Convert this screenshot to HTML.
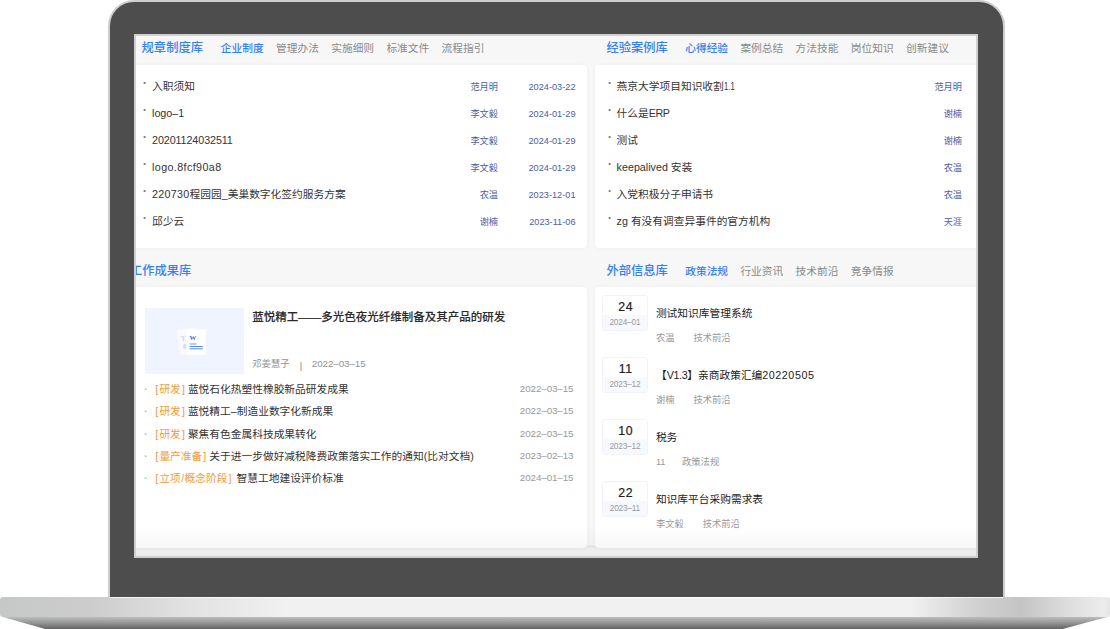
<!DOCTYPE html>
<html lang="zh-CN">
<head>
<meta charset="utf-8">
<title>知识库</title>
<style>
html,body{margin:0;padding:0;}
body{width:1110px;height:629px;overflow:hidden;background:#fff;position:relative;
  font-family:"Liberation Sans","Noto Sans CJK SC",sans-serif;color:#333;}
*{box-sizing:border-box;}
.lid{position:absolute;left:108px;top:0;width:897px;height:600px;border:2px solid #cdcdcd;border-bottom:0;
  border-radius:26px 26px 0 0;background:#4d4d4d;}
.base{position:absolute;left:0;top:597px;width:1110px;height:20px;border-radius:3px;
  background:linear-gradient(to right,#c6c8c8 0,#cccccc 8%,#e2e2e2 17%,#f1f1f1 26%,#f1f1f1 82%,#d0d0d0 88%,#c4c4c4 92%,#dcdcdc 96%,#ececec 99.5%,#e4e4e4 100%);}
.hl{position:absolute;left:110px;top:597px;width:893px;height:1px;background:rgba(255,255,255,.75);}
.foot{position:absolute;left:0;top:616.5px;width:1110px;height:13px;
  background:linear-gradient(to bottom,#bcbcbc 0,#9a9a9a 40%,#5c5c5c 100%);
  clip-path:polygon(1px 0,1109px 0,1061px 13px,47px 13px);}
.screen{position:absolute;left:134px;top:34px;width:844px;height:524px;border:2px solid #d0d0d0;background:#f7f7f7;overflow:hidden;}
.abs{position:absolute;}
.card{position:absolute;background:#fff;border-radius:4px;box-shadow:0 0 5px rgba(0,0,0,.045);}
.hd{position:absolute;height:20px;line-height:20px;white-space:nowrap;}
.hd .t{position:absolute;top:0;font-size:12.28px;color:#3580f6;font-weight:500;}
.hd .tab{position:absolute;top:.4px;font-size:10.72px;color:#8a8a8a;}
.hd .tab.on{color:#3580f6;font-weight:500;}
.row{position:absolute;left:0;right:0;height:20px;line-height:20px;font-size:10.72px;color:#333;white-space:nowrap;}
.row .b{position:absolute;top:-3.2px;font-size:7.6px;color:#777;margin-left:-.3px;}
.row .n{position:absolute;top:0;}
.row .a,.row .d{position:absolute;top:1.2px;font-size:9.2px;color:#4c5ea3;text-align:right;}
.r3{position:absolute;height:20px;line-height:20px;font-size:10.72px;color:#333;white-space:nowrap;left:0;right:0;}
.r3 .b{position:absolute;left:0;top:0;color:#bdbdbd;font-weight:bold;margin-left:-.3px;}
.r3 .tg{color:#f59a3a;}
.r3 .tg b{font-weight:normal;letter-spacing:1.1px;}
.r3 .tg i{font-style:normal;margin-left:1.1px;}
.r3 .d{position:absolute;top:0;font-size:9.9px;color:#9a9a9a;text-align:right;letter-spacing:-.12px;}
.it{position:absolute;left:0;right:0;height:40px;}
.db{position:absolute;left:-.6px;top:-.2px;width:46px;height:36.2px;border:1px solid #f0f3fc;border-radius:3px;background:#fff;overflow:hidden;text-align:center;}
.db .dd{position:absolute;left:0;right:0;top:0;height:19px;line-height:23.4px;font-size:12.28px;color:#222;-webkit-text-stroke:.22px #222;letter-spacing:.7px;text-indent:1.6px;}
.db .dm{position:absolute;left:0;right:0;top:19.2px;bottom:0;background:#f7f9fe;line-height:15.4px;font-size:8.3px;color:#999;letter-spacing:-.2px;}
.it .tt{position:absolute;top:0;font-size:10.72px;color:#222;line-height:20px;white-space:nowrap;}
.it .mt{position:absolute;font-size:9.3px;color:#999;line-height:16px;white-space:nowrap;}
</style>
</head>
<body>
<div class="lid"></div>
<div class="screen">
  <!-- header 1 -->
  <div class="hd" style="left:0;top:1.8px;width:460px;">
    <span class="t" style="left:5.6px;">规章制度库</span>
    <span class="tab on" style="left:84.8px;">企业制度</span>
    <span class="tab" style="left:140px;">管理办法</span>
    <span class="tab" style="left:195.2px;">实施细则</span>
    <span class="tab" style="left:250.4px;">标准文件</span>
    <span class="tab" style="left:305.6px;">流程指引</span>
  </div>
  <div class="hd" style="left:459px;top:1.8px;width:390px;">
    <span class="t" style="left:11.4px;">经验案例库</span>
    <span class="tab on" style="left:90.2px;">心得经验</span>
    <span class="tab" style="left:145.4px;">案例总结</span>
    <span class="tab" style="left:200.6px;">方法技能</span>
    <span class="tab" style="left:255.8px;">岗位知识</span>
    <span class="tab" style="left:311px;">创新建议</span>
  </div>

  <!-- card 1 -->
  <div class="card" style="left:-6px;top:28.8px;width:457px;height:183.2px;">
    <div class="row" style="top:10.9px;"><span class="b" style="left:13.5px;">•</span><span class="n" style="left:22px;">入职须知</span><span class="a" style="right:89px;">范月明</span><span class="d" style="right:11.5px;">2024-03-22</span></div>
    <div class="row" style="top:38.0px;"><span class="b" style="left:13.5px;">•</span><span class="n" style="left:22px;">logo–1</span><span class="a" style="right:89px;">李文毅</span><span class="d" style="right:11.5px;">2024-01-29</span></div>
    <div class="row" style="top:65.1px;"><span class="b" style="left:13.5px;">•</span><span class="n" style="left:22px;"><span style="letter-spacing:-.08px">20201124032511</span></span><span class="a" style="right:89px;">李文毅</span><span class="d" style="right:11.5px;">2024-01-29</span></div>
    <div class="row" style="top:92.2px;"><span class="b" style="left:13.5px;">•</span><span class="n" style="left:22px;"><span style="letter-spacing:.4px">logo.8fcf90a8</span></span><span class="a" style="right:89px;">李文毅</span><span class="d" style="right:11.5px;">2024-01-29</span></div>
    <div class="row" style="top:119.3px;"><span class="b" style="left:13.5px;">•</span><span class="n" style="left:22px;"><span style="letter-spacing:.3px">220730</span>程园园_美巢数字化签约服务方案</span><span class="a" style="right:89px;">农温</span><span class="d" style="right:11.5px;">2023-12-01</span></div>
    <div class="row" style="top:146.4px;"><span class="b" style="left:13.5px;">•</span><span class="n" style="left:22px;">邱少云</span><span class="a" style="right:89px;">谢楠</span><span class="d" style="right:11.5px;">2023-11-06</span></div>
  </div>

  <!-- card 2 -->
  <div class="card" style="left:459px;top:28.8px;width:400px;height:183.2px;">
    <div class="row" style="top:10.9px;"><span class="b" style="left:13.5px;">•</span><span class="n" style="left:21.6px;">燕京大学项目知识收割<span style="display:inline-block;transform:scaleX(.72);transform-origin:0 50%;">1.1</span></span><span class="a" style="right:33px;">范月明</span></div>
    <div class="row" style="top:38.0px;"><span class="b" style="left:13.5px;">•</span><span class="n" style="left:21.6px;">什么是<span style="letter-spacing:-.4px">ERP</span></span><span class="a" style="right:33px;">谢楠</span></div>
    <div class="row" style="top:65.1px;"><span class="b" style="left:13.5px;">•</span><span class="n" style="left:21.6px;">测试</span><span class="a" style="right:33px;">谢楠</span></div>
    <div class="row" style="top:92.2px;"><span class="b" style="left:13.5px;">•</span><span class="n" style="left:21.6px;">keepalived 安装</span><span class="a" style="right:33px;">农温</span></div>
    <div class="row" style="top:119.3px;"><span class="b" style="left:13.5px;">•</span><span class="n" style="left:21.6px;">入党积极分子申请书</span><span class="a" style="right:33px;">农温</span></div>
    <div class="row" style="top:146.4px;"><span class="b" style="left:13.5px;">•</span><span class="n" style="left:21.6px;">zg 有没有调查异事件的官方机构</span><span class="a" style="right:33px;">天涯</span></div>
  </div>

  <!-- header 2 -->
  <div class="hd" style="left:0;top:224.8px;width:460px;">
    <span class="t" style="left:-6px;">工作成果库</span>
  </div>
  <div class="hd" style="left:459px;top:224.8px;width:390px;">
    <span class="t" style="left:11.4px;">外部信息库</span>
    <span class="tab on" style="left:90.2px;">政策法规</span>
    <span class="tab" style="left:145.4px;">行业资讯</span>
    <span class="tab" style="left:200.6px;">技术前沿</span>
    <span class="tab" style="left:255.8px;">竞争情报</span>
  </div>

  <div class="abs" style="left:0;top:508.5px;width:840px;height:12px;background:#ececec;"></div>
  <!-- card 3 -->
  <div class="card" style="left:-6px;top:251.2px;width:457px;height:260.4px;">
    <div class="abs" style="left:14.7px;top:21.3px;width:99.3px;height:65.2px;background:#f0f4fe;">
      <svg class="abs" style="left:28.3px;top:17.5px;" width="36" height="32" viewBox="0 0 36 32">
        <g transform="rotate(-9 17.1 27.7)"><rect x="7.2" y="2.4" width="19.8" height="25.3" rx="1.3" fill="#f8faff"/>
        <text x="10.2" y="14" font-size="7.2" fill="#cbd8f6" font-family="Liberation Serif,serif" font-weight="bold">T</text>
        <circle cx="13.6" cy="19.7" r="2.5" fill="#d3def7"/></g>
        <rect x="13.3" y="3.5" width="19.8" height="25.2" rx="1.3" fill="#fff"/>
        <text x="16.4" y="14.3" font-size="6.6" fill="#2c6cec" font-family="Liberation Serif,serif" font-weight="bold">W</text>
        <rect x="16.6" y="17.2" width="7" height="1.6" fill="#a6bff5"/>
        <rect x="16.6" y="20" width="13.2" height="1" fill="#5388f0"/>
        <rect x="16.6" y="22.3" width="13.2" height="1" fill="#5388f0"/>
      </svg>
    </div>
    <div class="abs" style="left:122.3px;top:20px;font-size:11.5px;font-weight:500;-webkit-text-stroke:.12px #2a2a2a;color:#2a2a2a;line-height:20px;white-space:nowrap;">蓝悦精工——多光色夜光纤维制备及其产品的研发</div>
    <div class="abs" style="left:122.3px;top:68px;font-size:9.3px;color:#939393;line-height:18px;white-space:nowrap;">邓姜慧子<span style="position:absolute;left:47.5px;top:2.2px;color:#808080;">|</span><span style="position:absolute;left:59.5px;top:0;font-size:9.9px;letter-spacing:-.12px;">2022–03–15</span></div>

    <div class="r3" style="top:91.8px;"><span class="b" style="left:14.3px;">·</span><span class="abs" style="left:25.3px;top:0;"><span class="tg"><b>[</b>研发<i>]</i></span> 蓝悦石化热塑性橡胶新品研发成果</span><span class="d" style="right:13.5px;">2022–03–15</span></div>
    <div class="r3" style="top:114.1px;"><span class="b" style="left:14.3px;">·</span><span class="abs" style="left:25.3px;top:0;"><span class="tg"><b>[</b>研发<i>]</i></span> 蓝悦精工–制造业数字化新成果</span><span class="d" style="right:13.5px;">2022–03–15</span></div>
    <div class="r3" style="top:136.4px;"><span class="b" style="left:14.3px;">·</span><span class="abs" style="left:25.3px;top:0;"><span class="tg"><b>[</b>研发<i>]</i></span> 聚焦有色金属科技成果转化</span><span class="d" style="right:13.5px;">2022–03–15</span></div>
    <div class="r3" style="top:158.7px;"><span class="b" style="left:14.3px;">·</span><span class="abs" style="left:25.3px;top:0;"><span class="tg"><b>[</b>量产准备<i>]</i></span> 关于进一步做好减税降费政策落实工作的通知(比对文档)</span><span class="d" style="right:13.5px;">2023–02–13</span></div>
    <div class="r3" style="top:181.0px;"><span class="b" style="left:14.3px;">·</span><span class="abs" style="left:25.3px;top:0;"><span class="tg"><b>[</b>立项<span style="margin:0 .4px">/</span>概念阶段<i>]</i></span><span style="margin-left:2px"> </span>智慧工地建设评价标准</span><span class="d" style="right:13.5px;">2024–01–15</span></div>
  </div>

  <!-- card 4 -->
  <div class="card" style="left:459px;top:251.2px;width:400px;height:260.4px;border-radius:4px 0 0 4px;">
    <div class="it" style="top:7.8px;left:7.5px;">
      <div class="db"><div class="dd">24</div><div class="dm">2024–01</div></div>
      <div class="tt" style="left:53.4px;top:7.7px;">测试知识库管理系统</div>
      <div class="mt" style="left:53.4px;top:35.1px;">农温</div><div class="mt" style="left:90.9px;top:35.1px;">技术前沿</div>
    </div>
    <div class="it" style="top:69.9px;left:7.5px;">
      <div class="db"><div class="dd">11</div><div class="dm">2023–12</div></div>
      <div class="tt" style="left:53.4px;top:7.7px;">【<span style="letter-spacing:-.35px">V1.3</span>】亲商政策汇编<span style="letter-spacing:.55px">20220505</span></div>
      <div class="mt" style="left:53.4px;top:35.1px;">谢楠</div><div class="mt" style="left:90.9px;top:35.1px;">技术前沿</div>
    </div>
    <div class="it" style="top:132px;left:7.5px;">
      <div class="db"><div class="dd">10</div><div class="dm">2023–12</div></div>
      <div class="tt" style="left:53.4px;top:7.7px;">税务</div>
      <div class="mt" style="left:53.4px;top:35.1px;">11</div><div class="mt" style="left:79.5px;top:35.1px;">政策法规</div>
    </div>
    <div class="it" style="top:194.1px;left:7.5px;">
      <div class="db"><div class="dd">22</div><div class="dm">2023–11</div></div>
      <div class="tt" style="left:53.4px;top:7.7px;">知识库平台采购需求表</div>
      <div class="mt" style="left:53.4px;top:35.1px;">李文毅</div><div class="mt" style="left:100.2px;top:35.1px;">技术前沿</div>
    </div>
  </div>

  <div class="abs" style="left:0;top:488px;width:840px;height:24px;background:linear-gradient(to bottom,rgba(0,0,0,0) 0,rgba(0,0,0,.012) 50%,rgba(0,0,0,.03) 100%);"></div>
</div>
<div class="foot"></div>
<div class="base"></div>
<div class="hl"></div>
</body>
</html>
